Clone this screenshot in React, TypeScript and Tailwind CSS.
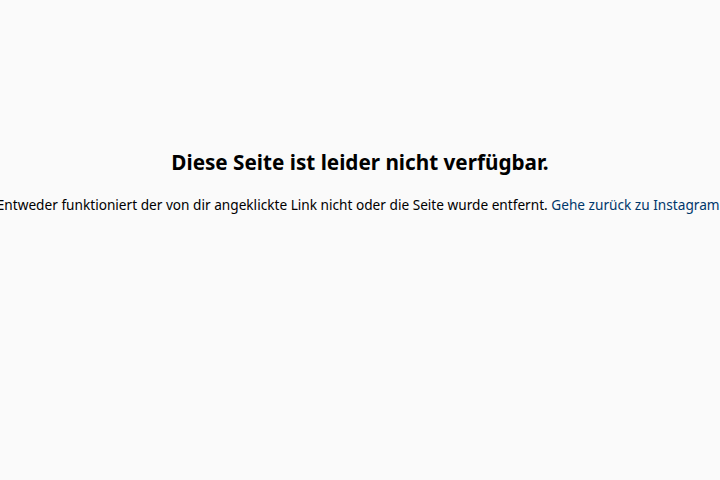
export default function App() {
  return (
    <div className="h-[480px] w-[720px] overflow-hidden bg-[#fafafa] font-['Noto_Sans',sans-serif] text-[#262626]">
      <div className="flex flex-col items-center pt-[147px]">
        <h2 className="whitespace-nowrap text-[20.7px] font-bold leading-[30px] text-black">
          Diese Seite ist leider nicht verfügbar.
        </h2>
        <div className="mt-[19px] flex w-full justify-center">
          <p className="whitespace-nowrap text-[13.65px] leading-[18px] text-black">
            Entweder funktioniert der von dir angeklickte Link nicht oder die Seite wurde entfernt.{' '}
            <a className="text-[#00376b]">Gehe zurück zu Instagram.</a>
          </p>
        </div>
      </div>
    </div>
  )
}
